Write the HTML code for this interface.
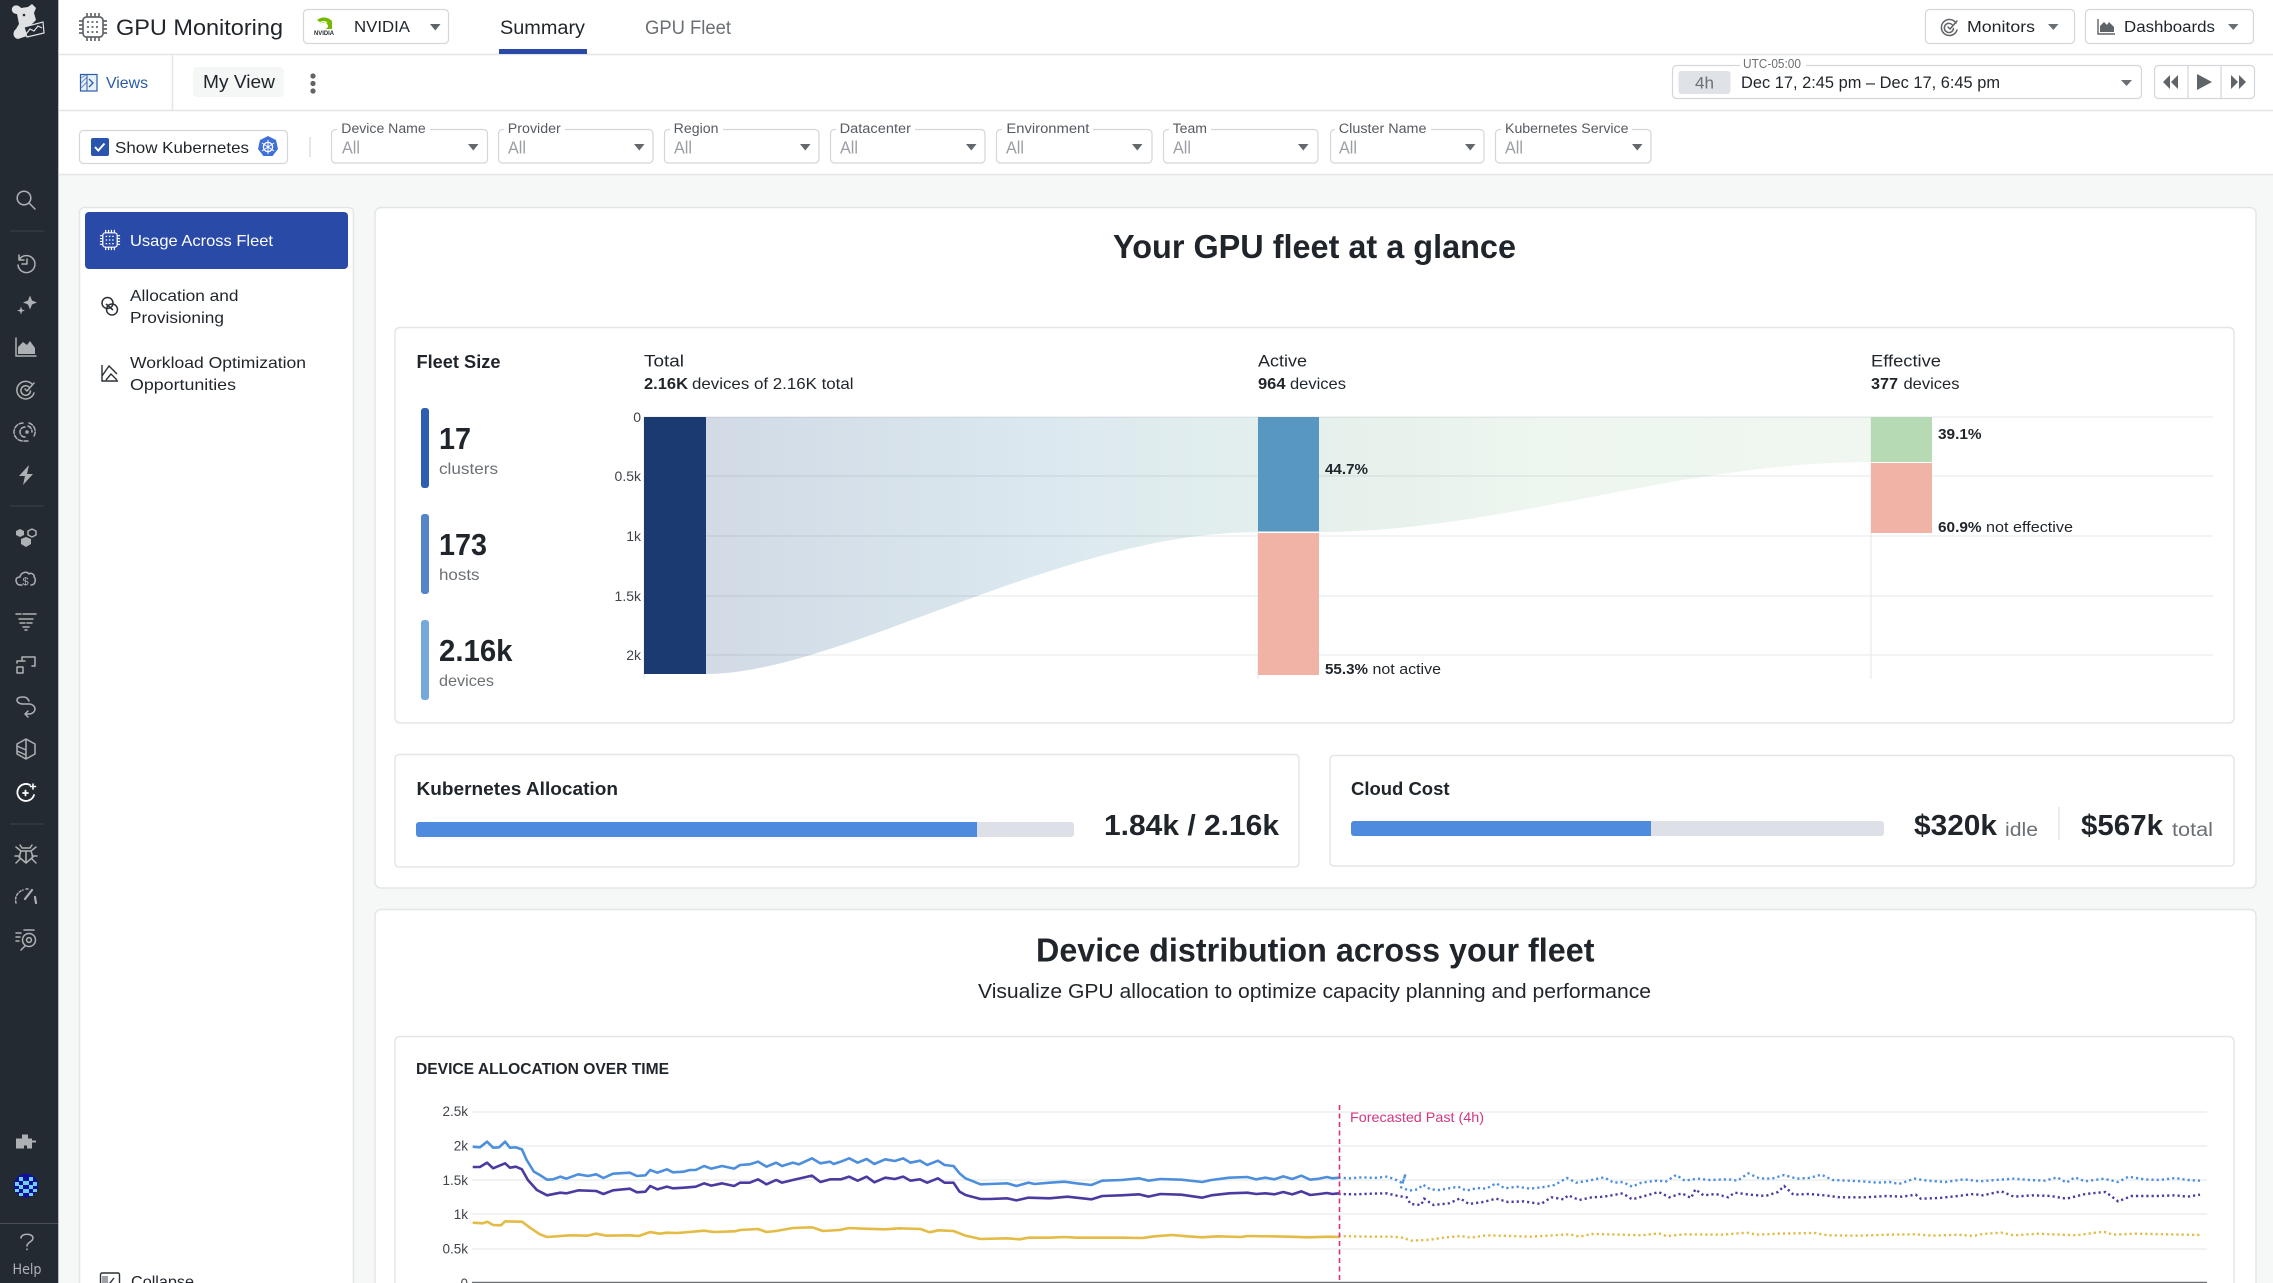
<!DOCTYPE html>
<html lang="en"><head><meta charset="utf-8"><title>GPU Monitoring</title>
<style>
html,body{margin:0;padding:0;background:#f6f8f8;width:2273px;height:1283px;overflow:hidden}
svg{display:block}
text{font-family:"Liberation Sans","Noto Sans CJK JP",sans-serif;fill:#1f252b;white-space:pre}
.lb{font-size:13.5px;fill:#565b61}.all{font-size:17.5px;fill:#9a9ea3}
.b{font-weight:700}.g{fill:#6b7075}
.ax{font-size:14px;fill:#3f454b;text-anchor:end}
.box{fill:#fff;stroke:#d3d6da;stroke-width:1.2}
.card{fill:#fff;stroke:#e3e5e8;stroke-width:1.5}
.ic{fill:none;stroke:#aeb1b4;stroke-width:1.5;stroke-linecap:round;stroke-linejoin:round}
.fi{fill:#aeb1b4}
.gr{stroke:rgba(30,40,60,.075);stroke-width:1.5}
</style></head><body>
<svg xmlns="http://www.w3.org/2000/svg" width="2273" height="1283" viewBox="0 0 2273 1283">
<defs>
<linearGradient id="f1" gradientUnits="userSpaceOnUse" x1="706" x2="1258" y1="0" y2="0"><stop offset="0" stop-color="#d1dae5"/><stop offset=".6" stop-color="#dbe8ef"/><stop offset="1" stop-color="#e3efee"/></linearGradient>
<linearGradient id="f2" gradientUnits="userSpaceOnUse" x1="1319" x2="1871" y1="0" y2="0"><stop offset="0" stop-color="#e5f0ec"/><stop offset=".4" stop-color="#edf6ef"/><stop offset="1" stop-color="#f0f7f1"/></linearGradient>
<g id="chip" fill="none" stroke="currentColor" stroke-width="1.7">
<rect x="-10" y="-10" width="20" height="20" rx="3.5"/>
<path d="M-6-10v-4M-2-10v-4M2-10v-4M6-10v-4M-6 10v4M-2 10v4M2 10v4M6 10v4M-10-6h-4M-10-2h-4M-10 2h-4M-10 6h-4M10-6h4M10-2h4M10 2h4M10 6h4"/>
<path stroke-dasharray="2 2.5" d="M-6-5h12M-6 0h12M-6 5h12"/>
</g>
</defs>

<!-- top bars -->
<rect x="58" y="0" width="2215" height="174" fill="#fff"/>
<line x1="58" y1="54.5" x2="2273" y2="54.5" stroke="#e3e5e8" stroke-width="1.5"/>
<line x1="58" y1="110.5" x2="2273" y2="110.5" stroke="#e3e5e8" stroke-width="1.5"/>
<line x1="58" y1="174.5" x2="2273" y2="174.5" stroke="#e3e5e8" stroke-width="1.5"/>
<line x1="172.5" y1="55" x2="172.5" y2="110" stroke="#e3e5e8" stroke-width="1.5"/>

<use href="#chip" transform="translate(93,27)" style="color:#63676c"/>
<text x="116" y="35" font-size="22.5" textLength="167" lengthAdjust="spacingAndGlyphs">GPU Monitoring</text>
<rect class="box" x="303.5" y="9.5" width="145" height="34" rx="4"/>
<path d="M317 20c5-4 11-3 15 1v8h-8c4 0 5-3 3-5-2-2-5-2-7 0 1-1 0-2-3-4z" fill="#76b900"/>
<path d="M320 23c2-2 5-2 7 0" fill="none" stroke="#fff" stroke-width="1"/>
<text x="314" y="35" font-size="6.5" class="b" textLength="20" lengthAdjust="spacingAndGlyphs">NVIDIA</text>
<text x="354" y="32" font-size="15.5" textLength="56" lengthAdjust="spacingAndGlyphs">NVIDIA</text>
<path d="M430 24h10.5l-5.2 6.5z" fill="#5f6468"/>
<text x="500" y="34" font-size="19" textLength="85" lengthAdjust="spacingAndGlyphs">Summary</text>
<rect x="499" y="49" width="88" height="5" fill="#2a4aa8"/>
<text x="645" y="34" font-size="19" class="g" textLength="86" lengthAdjust="spacingAndGlyphs">GPU Fleet</text>

<!-- right buttons -->
<rect class="box" x="1925.5" y="9.5" width="149" height="34" rx="4"/>
<g class="ic" style="stroke:#5f6468" transform="translate(1949,27)"><path d="M7-4a8 8 0 1 0 1 7M3-2.5a4.6 4.6 0 1 0 1.5 4M-1 0l2 2 7-8"/></g>
<text x="1967" y="32" font-size="15.5" textLength="68" lengthAdjust="spacingAndGlyphs">Monitors</text>
<path d="M2048 24h10.5l-5.2 6z" fill="#6a6f74"/>
<rect class="box" x="2085.5" y="9.5" width="168" height="34" rx="4"/>
<path d="M2098 19v15h17" fill="none" stroke="#5f6468" stroke-width="1.4"/><path d="M2100 32v-6l4-4 3 3 2-3 5 5v5z" fill="#5f6468"/>
<text x="2124" y="32" font-size="15.5" textLength="91" lengthAdjust="spacingAndGlyphs">Dashboards</text>
<path d="M2228 24h10.5l-5.2 6z" fill="#6a6f74"/>

<!-- views row -->
<rect x="80.5" y="74.5" width="16.5" height="16.5" fill="#eaf0f8" stroke="#2b5ba8" stroke-width="1.2"/>
<path d="M81 78l5-3M81 83l6-6M81 88l6-6" stroke="#6b90c8" stroke-width="1"/><path d="M87 75v16" stroke="#2b5ba8"/><path d="M89 79l4 4-4 4" fill="none" stroke="#2b5ba8" stroke-width="1.3"/>
<text x="106" y="88" font-size="16" style="fill:#2b5ba8" textLength="42" lengthAdjust="spacingAndGlyphs">Views</text>
<rect x="193" y="67" width="91" height="30" rx="4" fill="#f5f6f6"/>
<text x="203" y="88" font-size="18" textLength="72" lengthAdjust="spacingAndGlyphs">My View</text>
<circle cx="313" cy="76" r="2.6" fill="#5f6468"/><circle cx="313" cy="83.5" r="2.6" fill="#5f6468"/><circle cx="313" cy="91" r="2.6" fill="#5f6468"/>

<!-- time -->
<rect class="box" x="1672.5" y="65.5" width="469" height="33" rx="4"/>
<rect x="1740" y="62" width="66" height="6" fill="#fff"/>
<text x="1743" y="68" font-size="12.5" class="g" textLength="58" lengthAdjust="spacingAndGlyphs">UTC-05:00</text>
<rect x="1678.5" y="71" width="52" height="23" rx="3" fill="#dfe2e7"/>
<text x="1695" y="88.5" font-size="17" class="g" textLength="19" lengthAdjust="spacingAndGlyphs">4h</text>
<text x="1741" y="88" font-size="17" textLength="259" lengthAdjust="spacingAndGlyphs">Dec 17, 2:45 pm – Dec 17, 6:45 pm</text>
<path d="M2121 80h11l-5.5 6z" fill="#6a6f74"/>
<rect class="box" x="2154.5" y="65.5" width="100" height="33" rx="4"/>
<path d="M2188 66v32M2221 66v32" stroke="#d3d6da" stroke-width="1.2"/>
<path d="M2170 75v14l-7-7zM2178 75v14l-7-7zM2197 74l15 8-15 8zM2231 75l7 7-7 7zM2239 75l7 7-7 7z" fill="#5f6468"/>

<!-- filters -->
<rect class="box" x="79.5" y="130.5" width="208" height="33" rx="4"/>
<rect x="91" y="138" width="18" height="18" rx="2" fill="#2a55ad"/>
<path d="M95 147l3.3 3.5 6.2-7" fill="none" stroke="#fff" stroke-width="2"/>
<text x="115" y="153" font-size="16" textLength="134" lengthAdjust="spacingAndGlyphs">Show Kubernetes</text>
<path d="M268 136l8 4 2 9-5.5 7h-9l-5.5-7 2-9z" fill="#3f6fd8"/>
<circle cx="268" cy="147" r="4.6" fill="none" stroke="#fff" stroke-width="1.3"/>
<path d="M268 140v14M262 143l12 8M274 143l-12 8" stroke="#fff" stroke-width="1"/>
<line x1="310" y1="137" x2="310" y2="157" stroke="#dcdfe2" stroke-width="1.5"/>

<rect class="box" x="331.5" y="129.5" width="156" height="33.5" rx="4"/><rect x="337" y="126" width="93" height="6" fill="#fff"/><text class="lb" x="341.3" y="133" textLength="84.4" lengthAdjust="spacingAndGlyphs">Device Name</text><text class="all" x="342" y="153.5" textLength="18" lengthAdjust="spacingAndGlyphs">All</text><path d="M468 144h10.5l-5.2 6.5z" fill="#63686d"/>
<rect class="box" x="498.5" y="129.5" width="154.5" height="33.5" rx="4"/><rect x="504" y="126" width="61" height="6" fill="#fff"/><text class="lb" x="507.8" y="133" textLength="53" lengthAdjust="spacingAndGlyphs">Provider</text><text class="all" x="508" y="153.5" textLength="18" lengthAdjust="spacingAndGlyphs">All</text><path d="M634 144h10.5l-5.2 6.5z" fill="#63686d"/>
<rect class="box" x="664.5" y="129.5" width="154.5" height="33.5" rx="4"/><rect x="670" y="126" width="53" height="6" fill="#fff"/><text class="lb" x="673.7" y="133" textLength="44.8" lengthAdjust="spacingAndGlyphs">Region</text><text class="all" x="674" y="153.5" textLength="18" lengthAdjust="spacingAndGlyphs">All</text><path d="M800 144h10.5l-5.2 6.5z" fill="#63686d"/>
<rect class="box" x="830.5" y="129.5" width="154.5" height="33.5" rx="4"/><rect x="836" y="126" width="79" height="6" fill="#fff"/><text class="lb" x="839.6" y="133" textLength="71.4" lengthAdjust="spacingAndGlyphs">Datacenter</text><text class="all" x="840" y="153.5" textLength="18" lengthAdjust="spacingAndGlyphs">All</text><path d="M966 144h10.5l-5.2 6.5z" fill="#63686d"/>
<rect class="box" x="996.5" y="129.5" width="155.5" height="33.5" rx="4"/><rect x="1002" y="126" width="91" height="6" fill="#fff"/><text class="lb" x="1006.4" y="133" textLength="83" lengthAdjust="spacingAndGlyphs">Environment</text><text class="all" x="1006" y="153.5" textLength="18" lengthAdjust="spacingAndGlyphs">All</text><path d="M1132 144h10.5l-5.2 6.5z" fill="#63686d"/>
<rect class="box" x="1163.5" y="129.5" width="154.5" height="33.5" rx="4"/><rect x="1169" y="126" width="42" height="6" fill="#fff"/><text class="lb" x="1172.6" y="133" textLength="34.4" lengthAdjust="spacingAndGlyphs">Team</text><text class="all" x="1173" y="153.5" textLength="18" lengthAdjust="spacingAndGlyphs">All</text><path d="M1298 144h10.5l-5.2 6.5z" fill="#63686d"/>
<rect class="box" x="1330.5" y="129.5" width="153.5" height="33.5" rx="4"/><rect x="1335" y="126" width="96" height="6" fill="#fff"/><text class="lb" x="1338.8" y="133" textLength="87.7" lengthAdjust="spacingAndGlyphs">Cluster Name</text><text class="all" x="1339" y="153.5" textLength="18" lengthAdjust="spacingAndGlyphs">All</text><path d="M1465 144h10.5l-5.2 6.5z" fill="#63686d"/>
<rect class="box" x="1495.5" y="129.5" width="155.5" height="33.5" rx="4"/><rect x="1501" y="126" width="131" height="6" fill="#fff"/><text class="lb" x="1505" y="133" textLength="123.5" lengthAdjust="spacingAndGlyphs">Kubernetes Service</text><text class="all" x="1505" y="153.5" textLength="18" lengthAdjust="spacingAndGlyphs">All</text><path d="M1632 144h10.5l-5.2 6.5z" fill="#63686d"/>

<!-- left nav panel -->
<rect class="card" x="79.5" y="207.5" width="274" height="1100" rx="5"/>
<rect x="85" y="212" width="263" height="57" rx="4" fill="#2a4aa8"/>
<use href="#chip" transform="translate(110,240) scale(.72)" style="color:#fff"/>
<text x="130" y="246" font-size="16" style="fill:#fff" textLength="143" lengthAdjust="spacingAndGlyphs">Usage Across Fleet</text>
<g fill="none" stroke="#2b3036" stroke-width="1.5"><circle cx="107.5" cy="303" r="5.5"/><circle cx="112" cy="309.5" r="5.5"/><path d="M106 304l7 6"/></g>
<text x="130" y="301" font-size="16" textLength="108.5" lengthAdjust="spacingAndGlyphs">Allocation and</text>
<text x="130" y="323" font-size="16" textLength="94" lengthAdjust="spacingAndGlyphs">Provisioning</text>
<path d="M102 365v16h16M102 376l7-10 8 8M106 380l5-6 6 6" fill="none" stroke="#2b3036" stroke-width="1.4"/>
<text x="130" y="368" font-size="16" textLength="176" lengthAdjust="spacingAndGlyphs">Workload Optimization</text>
<text x="130" y="390" font-size="16" textLength="106" lengthAdjust="spacingAndGlyphs">Opportunities</text>
<rect x="100.5" y="1273" width="19" height="19" rx="1.5" fill="#fff" stroke="#2b3036" stroke-width="1.4"/><path d="M102 1276h6v14h-6z" fill="#9ea2a6"/><path d="M114 1278l-4 5 4 5" fill="none" stroke="#2b3036" stroke-width="1.4"/>
<text x="131" y="1287" font-size="16" textLength="63" lengthAdjust="spacingAndGlyphs">Collapse</text>

<!-- card 1 -->
<rect class="card" x="375" y="207.5" width="1881" height="680.5" rx="6"/>
<text x="1113" y="258" font-size="33" class="b" textLength="403" lengthAdjust="spacingAndGlyphs">Your GPU fleet at a glance</text>
<rect class="card" x="395" y="327.5" width="1839" height="395.5" rx="5"/>
<text x="416.5" y="368" font-size="18.5" class="b" textLength="84" lengthAdjust="spacingAndGlyphs">Fleet Size</text>
<rect x="421" y="408" width="8" height="80" rx="3" fill="#2d5fb0"/>
<rect x="421" y="514" width="8" height="80" rx="3" fill="#5585c8"/>
<rect x="421" y="620" width="8" height="80" rx="3" fill="#76a8dc"/>
<text x="439" y="449" font-size="31" class="b" textLength="32" lengthAdjust="spacingAndGlyphs">17</text>
<text x="439" y="474" font-size="16" class="g" textLength="59" lengthAdjust="spacingAndGlyphs">clusters</text>
<text x="439" y="555" font-size="31" class="b" textLength="48" lengthAdjust="spacingAndGlyphs">173</text>
<text x="439" y="580" font-size="16" class="g" textLength="40.5" lengthAdjust="spacingAndGlyphs">hosts</text>
<text x="439" y="661" font-size="31" class="b" textLength="73.5" lengthAdjust="spacingAndGlyphs">2.16k</text>
<text x="439" y="686" font-size="16" class="g" textLength="55" lengthAdjust="spacingAndGlyphs">devices</text>

<text x="644" y="366.5" font-size="17" textLength="40" lengthAdjust="spacingAndGlyphs">Total</text>
<text x="644" y="389" font-size="16" class="b" textLength="44" lengthAdjust="spacingAndGlyphs">2.16K</text>
<text x="692" y="389" font-size="16" textLength="161.5" lengthAdjust="spacingAndGlyphs">devices of 2.16K total</text>
<text x="1258" y="366.5" font-size="17" textLength="49" lengthAdjust="spacingAndGlyphs">Active</text>
<text x="1258" y="389" font-size="16" class="b" textLength="27.5" lengthAdjust="spacingAndGlyphs">964</text>
<text x="1290" y="389" font-size="16" textLength="56" lengthAdjust="spacingAndGlyphs">devices</text>
<text x="1871" y="366.5" font-size="17" textLength="70" lengthAdjust="spacingAndGlyphs">Effective</text>
<text x="1871" y="389" font-size="16" class="b" textLength="27" lengthAdjust="spacingAndGlyphs">377</text>
<text x="1903.5" y="389" font-size="16" textLength="56" lengthAdjust="spacingAndGlyphs">devices</text>

<text class="ax" x="641" y="422">0</text>
<text class="ax" x="641" y="481">0.5k</text>
<text class="ax" x="641" y="541">1k</text>
<text class="ax" x="641" y="601">1.5k</text>
<text class="ax" x="641" y="660">2k</text>

<path d="M706 417H1258V532C1060 532 840 674 706 674Z" fill="url(#f1)"/>
<path d="M1319 417H1871V462C1680 462 1500 532 1319 532Z" fill="url(#f2)"/>
<path class="gr" d="M644 417H2213M644 476H2213M644 536H2213M644 596H2213M644 655H2213"/>
<path d="M644 417V679M1258 417V679M1871 417V679" stroke="#e6e8eb" stroke-width="1.2"/>
<rect x="644" y="417" width="62" height="257" fill="#1c3a72"/>
<rect x="1258" y="417" width="61" height="114.5" fill="#5898c0"/>
<rect x="1258" y="533" width="61" height="142" fill="#f0b3a5"/>
<rect x="1871" y="417" width="61" height="45" fill="#b6dbb4"/>
<rect x="1871" y="463" width="61" height="70" fill="#f0b3a5"/>
<text x="1325" y="474" font-size="14.5" class="b" textLength="43" lengthAdjust="spacingAndGlyphs">44.7%</text>
<text x="1325" y="674" font-size="14.5" class="b" textLength="43" lengthAdjust="spacingAndGlyphs">55.3%</text>
<text x="1372.5" y="674" font-size="14.5" textLength="68.5" lengthAdjust="spacingAndGlyphs">not active</text>
<text x="1938" y="439" font-size="14.5" class="b" textLength="43.6" lengthAdjust="spacingAndGlyphs">39.1%</text>
<text x="1938" y="532" font-size="14.5" class="b" textLength="43.6" lengthAdjust="spacingAndGlyphs">60.9%</text>
<text x="1986" y="532" font-size="14.5" textLength="87" lengthAdjust="spacingAndGlyphs">not effective</text>

<rect class="card" x="395" y="754.5" width="904" height="112.5" rx="4"/>
<rect class="card" x="1330" y="755.5" width="904" height="110.5" rx="4"/>
<text x="416.5" y="795" font-size="18.5" class="b" textLength="201.5" lengthAdjust="spacingAndGlyphs">Kubernetes Allocation</text>
<text x="1351" y="795" font-size="18.5" class="b" textLength="98.5" lengthAdjust="spacingAndGlyphs">Cloud Cost</text>
<rect x="416" y="822" width="658" height="15" rx="3" fill="#dde0e6"/>
<path d="M419 822H977V837H419a3 3 0 0 1-3-3V825a3 3 0 0 1 3-3z" fill="#4e8bde"/>
<rect x="1351" y="821" width="533" height="15" rx="3" fill="#dde0e6"/>
<path d="M1354 821H1651V836H1354a3 3 0 0 1-3-3V824a3 3 0 0 1 3-3z" fill="#4e8bde"/>
<text x="1104" y="835" font-size="29" class="b" textLength="175" lengthAdjust="spacingAndGlyphs">1.84k / 2.16k</text>
<text x="1914" y="835" font-size="29" class="b" textLength="83" lengthAdjust="spacingAndGlyphs">$320k</text>
<text x="2005" y="836" font-size="19" class="g" textLength="33" lengthAdjust="spacingAndGlyphs">idle</text>
<line x1="2059" y1="807" x2="2059" y2="840" stroke="#dfe1e4" stroke-width="1.3"/>
<text x="2081" y="835" font-size="29" class="b" textLength="82" lengthAdjust="spacingAndGlyphs">$567k</text>
<text x="2172" y="836" font-size="19" class="g" textLength="41" lengthAdjust="spacingAndGlyphs">total</text>

<!-- card 2 -->
<rect class="card" x="375" y="909.5" width="1881" height="420" rx="6"/>
<text x="1036" y="961.5" font-size="33" class="b" textLength="558.5" lengthAdjust="spacingAndGlyphs">Device distribution across your fleet</text>
<text x="978" y="998" font-size="20" textLength="673" lengthAdjust="spacingAndGlyphs">Visualize GPU allocation to optimize capacity planning and performance</text>
<rect class="card" x="395" y="1036.5" width="1839" height="300" rx="5"/>
<text x="416" y="1074" font-size="16" class="b" textLength="253" lengthAdjust="spacingAndGlyphs">DEVICE ALLOCATION OVER TIME</text>
<text class="ax" x="468" y="1116" style="font-size:13.5px">2.5k</text>
<text class="ax" x="468" y="1150.5" style="font-size:13.5px">2k</text>
<text class="ax" x="468" y="1185" style="font-size:13.5px">1.5k</text>
<text class="ax" x="468" y="1219" style="font-size:13.5px">1k</text>
<text class="ax" x="468" y="1253.5" style="font-size:13.5px">0.5k</text>
<text class="ax" x="468" y="1288" style="font-size:13.5px">0</text>
<path d="M472 1112H2207M472 1146H2207M472 1180H2207M472 1214H2207M472 1249H2207" stroke="#eceef0" stroke-width="1.6"/>
<line x1="472" y1="1282.5" x2="2207" y2="1282.5" stroke="#6b7075" stroke-width="1.6"/>

<g transform="translate(390,1030) scale(.5995,.33333)" fill="none" stroke-width="2.6" stroke-linejoin="round">
<polyline style="vector-effect:non-scaling-stroke" stroke="#4d8fdc" points="138,350 150,352 162,335 172,353 182,352 192,335 200,353 210,352 220,358 228,390 240,425 250,435 262,449 272,448 284,440 294,446 314,433 330,438 344,433 356,444 372,431 400,428 412,438 426,436 434,420 446,428 462,418 472,427 490,425 500,420 510,420 524,408 536,416 554,408 574,416 584,405 600,403 614,395 628,410 644,398 654,408 672,398 682,403 704,385 718,400 734,395 740,402 752,395 766,385 780,398 795,387 808,402 826,388 842,393 856,385 868,398 884,392 896,405 914,392 925,405 940,408 950,430 960,445 985,463 1000,462 1030,460 1045,468 1065,458 1075,462 1100,458 1125,455 1145,460 1170,465 1188,452 1220,450 1250,445 1265,452 1285,447 1320,449 1355,456 1370,450 1400,443 1430,441 1445,448 1460,443 1475,448 1490,439 1505,447 1520,437 1535,449 1550,446 1563,441 1572,445 1583,443"/>
<polyline style="vector-effect:non-scaling-stroke" stroke="#4b3aa0" points="138,411 150,411 162,398 172,415 192,400 200,413 210,410 220,418 230,450 245,480 262,496 284,488 294,490 314,481 344,483 356,492 372,481 400,476 412,487 426,485 434,468 446,478 462,470 472,475 490,473 510,470 524,460 536,467 554,460 574,468 584,458 600,458 614,448 628,463 644,450 654,458 672,450 704,437 718,456 734,448 752,448 766,440 780,452 795,440 808,457 826,443 842,447 856,440 868,452 884,448 896,458 914,445 925,458 940,458 950,485 960,495 985,507 1000,507 1030,505 1045,511 1065,503 1100,505 1130,500 1170,508 1188,498 1220,496 1250,493 1265,500 1285,492 1320,494 1355,503 1370,496 1400,490 1430,488 1445,492 1460,490 1475,493 1490,486 1505,493 1520,484 1535,495 1550,492 1563,489 1572,492 1583,490"/>
<polyline style="vector-effect:non-scaling-stroke" stroke="#e3bb45" points="138,578 155,580 162,575 172,585 185,586 192,574 220,575 235,595 250,613 262,621 300,616 330,617 344,611 360,617 400,616 415,618 434,606 450,611 462,608 480,609 524,602 540,606 575,604 584,600 614,597 628,606 644,603 672,594 704,592 722,603 750,600 766,594 790,596 826,598 850,595 885,597 900,607 915,601 940,603 960,617 985,627 1030,625 1050,628 1065,623 1100,623 1125,621 1145,623 1220,623 1255,624 1275,619 1305,615 1330,619 1355,622 1380,619 1420,621 1430,618 1500,620 1530,622 1568,620 1583,621"/>
</g>
<g transform="translate(1300,1090) scale(.6207,.33333)" fill="none" stroke-width="2.4" stroke-dasharray="2.2 3">
<polyline style="vector-effect:non-scaling-stroke" stroke="#4d8fdc" points="62,263 80,265 100,262 120,264 140,260 150,266 158,272 165,280 170,252 163,292 176,302 190,298 198,284 210,298 225,300 240,295 255,290 268,302 285,294 300,296 316,280 330,295 350,290 370,296 390,292 410,285 430,264 445,278 465,272 490,262 505,278 520,276 535,290 550,278 575,272 590,274 606,255 620,272 640,266 660,270 690,268 705,272 722,250 740,265 760,266 780,255 800,266 820,264 840,254 858,270 880,272 905,274 930,278 950,276 965,282 990,266 1010,272 1040,276 1070,268 1095,274 1120,270 1150,266 1175,270 1200,272 1220,262 1235,278 1248,262 1265,274 1295,266 1318,276 1335,260 1360,268 1385,270 1410,264 1430,270 1450,272"/>
<polyline style="vector-effect:non-scaling-stroke" stroke="#4b3aa0" points="62,312 90,313 115,311 140,310 158,318 172,322 178,342 195,345 200,326 215,345 240,340 258,325 272,342 295,336 316,326 335,336 360,334 388,342 405,322 425,328 432,316 450,330 470,322 490,320 520,310 535,328 555,318 578,306 595,322 615,310 630,324 637,298 650,316 670,312 690,322 700,308 725,314 750,318 770,306 780,288 795,314 820,312 845,316 870,322 910,322 945,318 970,320 992,314 1000,326 1030,324 1060,318 1085,312 1100,316 1130,304 1150,320 1180,316 1210,318 1235,326 1265,312 1298,306 1318,334 1340,318 1380,318 1410,316 1430,320 1450,314"/>
<polyline style="vector-effect:non-scaling-stroke" stroke="#e3bb45" points="62,438 110,440 150,440 165,443 180,452 210,449 230,443 260,438 275,443 300,436 340,438 370,440 400,437 435,433 450,440 470,432 500,433 550,436 578,430 590,438 620,433 680,434 720,428 735,434 770,431 830,429 850,436 900,437 950,434 990,433 1020,437 1060,434 1085,438 1100,432 1130,428 1150,436 1190,431 1250,436 1295,425 1310,434 1345,431 1400,433 1450,435"/>
</g>
<line x1="1339.5" y1="1105" x2="1339.5" y2="1283" stroke="#d6337f" stroke-width="1.6" stroke-dasharray="5 3.5"/>
<text x="1350" y="1122" font-size="14" style="fill:#d33682" textLength="134" lengthAdjust="spacingAndGlyphs">Forecasted Past (4h)</text>

<!-- app sidebar -->
<rect x="0" y="0" width="58" height="1283" fill="#242a31"/>
<line x1="58.5" y1="0" x2="58.5" y2="1283" stroke="#b9bcc0" stroke-width="1"/>
<path d="M12 8C14 4 19 5 21 8L28 7 32 4 36 8 34 13 36 20 30 26 26 27 27 36 18 39C13 38 12 32 16 29L19 24 17 14C14 14 11 12 12 8Z" fill="#dfe1e3"/>
<path d="M24 27L43 22 44 33 27 37Z" fill="#242a31" stroke="#dfe1e3" stroke-width="1.2"/>
<path d="M26 34l4-5 4 2 4-5 4 2" fill="none" stroke="#dfe1e3" stroke-width="1.2"/>
<circle cx="24" cy="15" r="1.3" fill="#242a31"/>

<g class="ic" transform="translate(26,200)"><circle cx="-2" cy="-2" r="6.8"/><path d="M3 3l6 6"/></g>
<line x1="10" y1="231" x2="44" y2="231" stroke="#3c424a" stroke-width="1"/>
<g class="ic" transform="translate(26,263)"><path d="M-7-8v5h5M-7-3a8.5 8.5 0 1 1-1 5M1-4v5h-5"/></g>
<g class="fi" transform="translate(26,304.5)"><path d="M4-9l2 5 5 2-5 2-2 5-2-5-5-2 5-2zM-5 2l1 3 3 1-3 1-1 3-1-3-3-1 3-1z"/></g>
<g transform="translate(26,347)"><path class="ic" d="M-10-9V9H10"/><path class="fi" d="M-8 7V0l5-5 4 3 3-4 5 7v6z"/></g>
<g class="ic" transform="translate(26,389)"><path d="M6-5A8.8 8.8 0 1 0 8 4M3-2A4.8 4.8 0 1 0 4.5 2M-1 0L1 2 8-6"/></g>
<g class="ic" transform="translate(26,432)"><path d="M-3-9A9 9 0 0 0-3 9M-2 9L3 9M3-9A9 9 0 0 1 8 4M-1-5A5 5 0 0 0-1 5M2-6A6 6 0 0 1 6 0" stroke-dasharray="4 1.8"/><circle cx="1" cy="0" r="1" /></g>
<path class="fi" transform="translate(26,475)" d="M3-10L-7 1H-1L-3 10 7-1H1z"/>
<line x1="10" y1="506" x2="44" y2="506" stroke="#3c424a" stroke-width="1"/>
<g transform="translate(26,537)"><path class="fi" d="M-6-8l4 2v4l-4 2-4-2v-4zM0 0l5 2v5l-5 3-5-3V2z"/><path class="ic" d="M6-8l4 2v4l-4 2-4-2v-4z"/></g>
<g transform="translate(26,579)"><path class="ic" d="M-4 6H-6C-9 6-10 3-10 1S-8-2-6-2C-5-7 1-8 3-5 5-7 9-4 8-2 10-1 10 6 5 6"/><text x="-3.5" y="6" font-size="11" style="fill:#aeb1b4">$</text></g>
<path class="ic" transform="translate(26,620)" d="M-10-6h5M-3-6H10M-7-1H7M-6 3H-1M1 3H6M-3 7H3M-1 10H1"/>
<g class="ic" transform="translate(26,664)"><path d="M-9 3H-3V9H-9ZM-9-1V-3H-1M-4-3V-7H9V2H6"/></g>
<path class="ic" transform="translate(26,707)" d="M-3-3H3C7-3 9 0 9 2S7 7 3 7H-1M2 4L-1 7 2 10M-3-3C-7-3-9-5-9-7S-7-10-3-10 2-8 3-6"/>
<g class="ic" transform="translate(26,749)"><path d="M0-10L9-5V5L0 10-9 5V-5ZM0-10V10M-9-3L0 1M-9 2L0 6"/></g>
<g transform="translate(26,792)" fill="none" stroke="#fff" stroke-width="1.8" stroke-linecap="round"><path d="M4-7A8.5 8.5 0 1 0 8 3"/><path d="M-3 1h5M-.5-1.5v5"/><path d="M7-8v5M4.5-5.5h5" stroke-width="1.6"/></g>
<line x1="10" y1="824" x2="44" y2="824" stroke="#3c424a" stroke-width="1"/>
<g class="ic" transform="translate(26,854)"><path d="M-5-3H5L7 3 0 9-7 3ZM-4-6L4-6M0 9V-3M-5-3L-10-7M5-3L10-7M-6 2H-11M6 2H11M-6 5L-10 9M6 5L10 9M-4-6L-6-9M4-6L6-9"/></g>
<g transform="translate(26,897)"><path class="ic" d="M-10 6A10.5 10.5 0 0 1-3-7M0-8H2" stroke-dasharray="2 2"/><path class="ic" style="stroke-width:2.2" d="M-1 2L6-7M9 0L10 6"/></g>
<g class="ic" transform="translate(26,940)"><circle cx="3" cy="0" r="6.5"/><circle cx="3" cy="0" r="2.4"/><path d="M-10-7h5M-10-3h4M-10 1h3M-2-10H8M-1 6L-5 10"/></g>
<path class="fi" transform="translate(26,1141.5)" d="M-10-3h6v-4h6v4h4v2h4v2h-4v6h-5v-3h-3v3h-8z"/>
<circle cx="26" cy="1185.5" r="12" fill="#10109a"/>
<path d="M19 1177h4v4h-4zM29 1177h4v4h-4zM23 1181h6v4h-6zM15 1182h4v4h-4zM33 1182h4v4h-4zM19 1185h4v4h-4zM29 1185h4v4h-4zM23 1189h6v4h-6zM15 1189h4v3h-4zM33 1189h4v3h-4zM19 1193h4v3h-4zM29 1193h4v3h-4z" fill="#6fd0ee"/>
<line x1="0" y1="1223.5" x2="58" y2="1223.5" stroke="#4a4f56" stroke-width="1"/>
<path class="ic" d="M21 1238c0-5 12-5 12 0 0 4-6 4-6 8M27 1249v.5"/>
<text x="12.5" y="1274" font-size="14" style="fill:#aeb1b4;font-family:'DejaVu Sans',sans-serif" textLength="29" lengthAdjust="spacingAndGlyphs">Help</text>
</svg>
</body></html>
